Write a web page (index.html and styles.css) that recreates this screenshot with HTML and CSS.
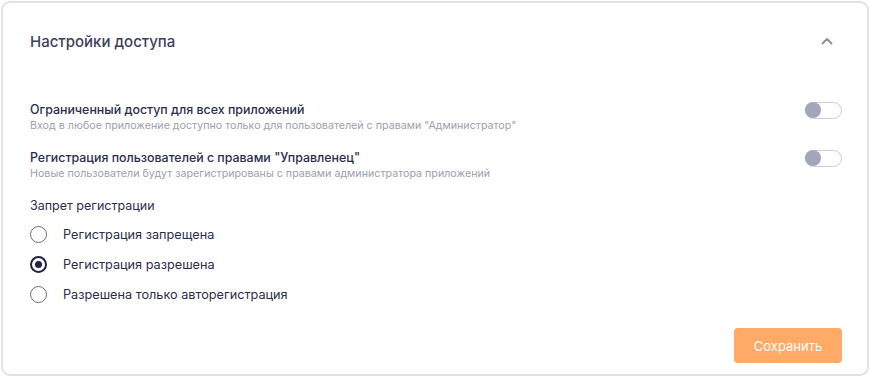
FILE: index.html
```html
<!DOCTYPE html>
<html lang="ru">
<head>
    <meta charset="UTF-8">
    <meta name="viewport" content="width=device-width, initial-scale=1.0">
    <title>Настройки доступа</title>
    <link rel="stylesheet" href="styles.css">
</head>
<body>

<div class="card">
    <div class="card-header">
        <h2>Настройки доступа</h2>
        <button class="collapse-btn" aria-label="Свернуть">
            <svg width="12" height="8" viewBox="0 0 12 8"><path d="M1.5 6.5 L6 2 L10.5 6.5" fill="none" stroke="#8a8d9c" stroke-width="1.8" stroke-linecap="round" stroke-linejoin="round"/></svg>
        </button>
    </div>

    <div class="card-body">
        <div class="setting">
            <div class="setting-text">
                <div class="setting-title">Ограниченный доступ для всех приложений</div>
                <div class="setting-desc">Вход в любое приложение доступно только для пользователей с правами "Администратор"</div>
            </div>
            <label class="toggle"><input type="checkbox"><span class="track"></span></label>
        </div>

        <div class="setting">
            <div class="setting-text">
                <div class="setting-title">Регистрация пользователей с правами "Управленец"</div>
                <div class="setting-desc">Новые пользователи будут зарегистрированы с правами администратора приложений</div>
            </div>
            <label class="toggle"><input type="checkbox"><span class="track"></span></label>
        </div>

        <div class="group">
            <div class="group-title">Запрет регистрации</div>
            <div class="radio-list">
                <label class="radio"><input type="radio" name="reg"><span class="dot"></span>Регистрация запрещена</label>
                <label class="radio"><input type="radio" name="reg" checked><span class="dot"></span>Регистрация разрешена</label>
                <label class="radio"><input type="radio" name="reg"><span class="dot"></span>Разрешена только авторегистрация</label>
            </div>
        </div>
    </div>

    <div class="card-footer">
        <button class="save-btn">Сохранить</button>
    </div>
</div>

</body>
</html>
```

FILE: styles.css
```css
body {
    font-family: Inter, "Noto Sans", sans-serif;
    background-color: #ffffff;
    color: #2c3150;
    margin: 0;
    padding: 1px;
}
.card {
    box-sizing: border-box;
    height: 375px;
    border: 2px solid #e2e2e4;
    border-radius: 9px;
    padding: 0 25px 0 27px;
    display: flex;
    flex-direction: column;
}
.card-header {
    display: flex;
    justify-content: space-between;
    align-items: center;
    padding-top: 28px;
    height: 22px;
}
.card-header h2 {
    margin: 0;
    font-size: 15px;
    font-weight: 500;
    color: #3b3f5c;
    line-height: 22px;
}
.collapse-btn {
    border: none;
    background: none;
    padding: 0;
    width: 20px;
    height: 20px;
    margin: 0 5px 3px 0;
    display: flex;
    align-items: center;
    justify-content: center;
    cursor: pointer;
}
.card-body {
    padding-top: 48px;
    display: flex;
    flex-direction: column;
    gap: 16px;
}
.setting {
    display: flex;
    justify-content: space-between;
    align-items: flex-start;
}
.setting-title {
    font-size: 12.4px;
    line-height: 18px;
    font-weight: 500;
    color: #2a2e4c;
}
.group-title {
    font-size: 12.5px;
    line-height: 18px;
    color: #2a2e4c;
}
.setting-desc {
    font-size: 10.7px;
    line-height: 14px;
    color: #9ea0ae;
}
.toggle input, .radio input {
    display: none;
}
.toggle .track {
    display: block;
    box-sizing: border-box;
    width: 37px;
    height: 17px;
    margin-top: 1px;
    border: 1.5px solid #cdcfd7;
    border-radius: 9px;
    position: relative;
    cursor: pointer;
}
.toggle .track::after {
    content: "";
    position: absolute;
    left: -1px;
    top: -1px;
    width: 16px;
    height: 16px;
    border-radius: 50%;
    background-color: #a3a6bb;
}
.radio-list {
    margin-top: 4px;
    display: flex;
    flex-direction: column;
}
.radio {
    display: flex;
    align-items: center;
    height: 30.3px;
    font-size: 12.7px;
    color: #2a2e4c;
    cursor: pointer;
}
.radio .dot {
    box-sizing: border-box;
    width: 17px;
    height: 17px;
    border: 1.6px solid #6e6e73;
    border-radius: 50%;
    margin: 0 16px 0 0;
    display: flex;
    align-items: center;
    justify-content: center;
}
.radio input:checked + .dot {
    border: 2px solid #1f2240;
}
.radio input:checked + .dot::after {
    content: "";
    width: 7px;
    height: 7px;
    border-radius: 50%;
    background-color: #1f2240;
}
.card-footer {
    margin-top: auto;
    display: flex;
    justify-content: flex-end;
    padding-bottom: 11px;
}
.save-btn {
    width: 108px;
    height: 35px;
    border: none;
    border-radius: 4px;
    background-color: #ffaa66;
    color: #ffffff;
    font-family: inherit;
    font-size: 13px;
    cursor: pointer;
}
```
